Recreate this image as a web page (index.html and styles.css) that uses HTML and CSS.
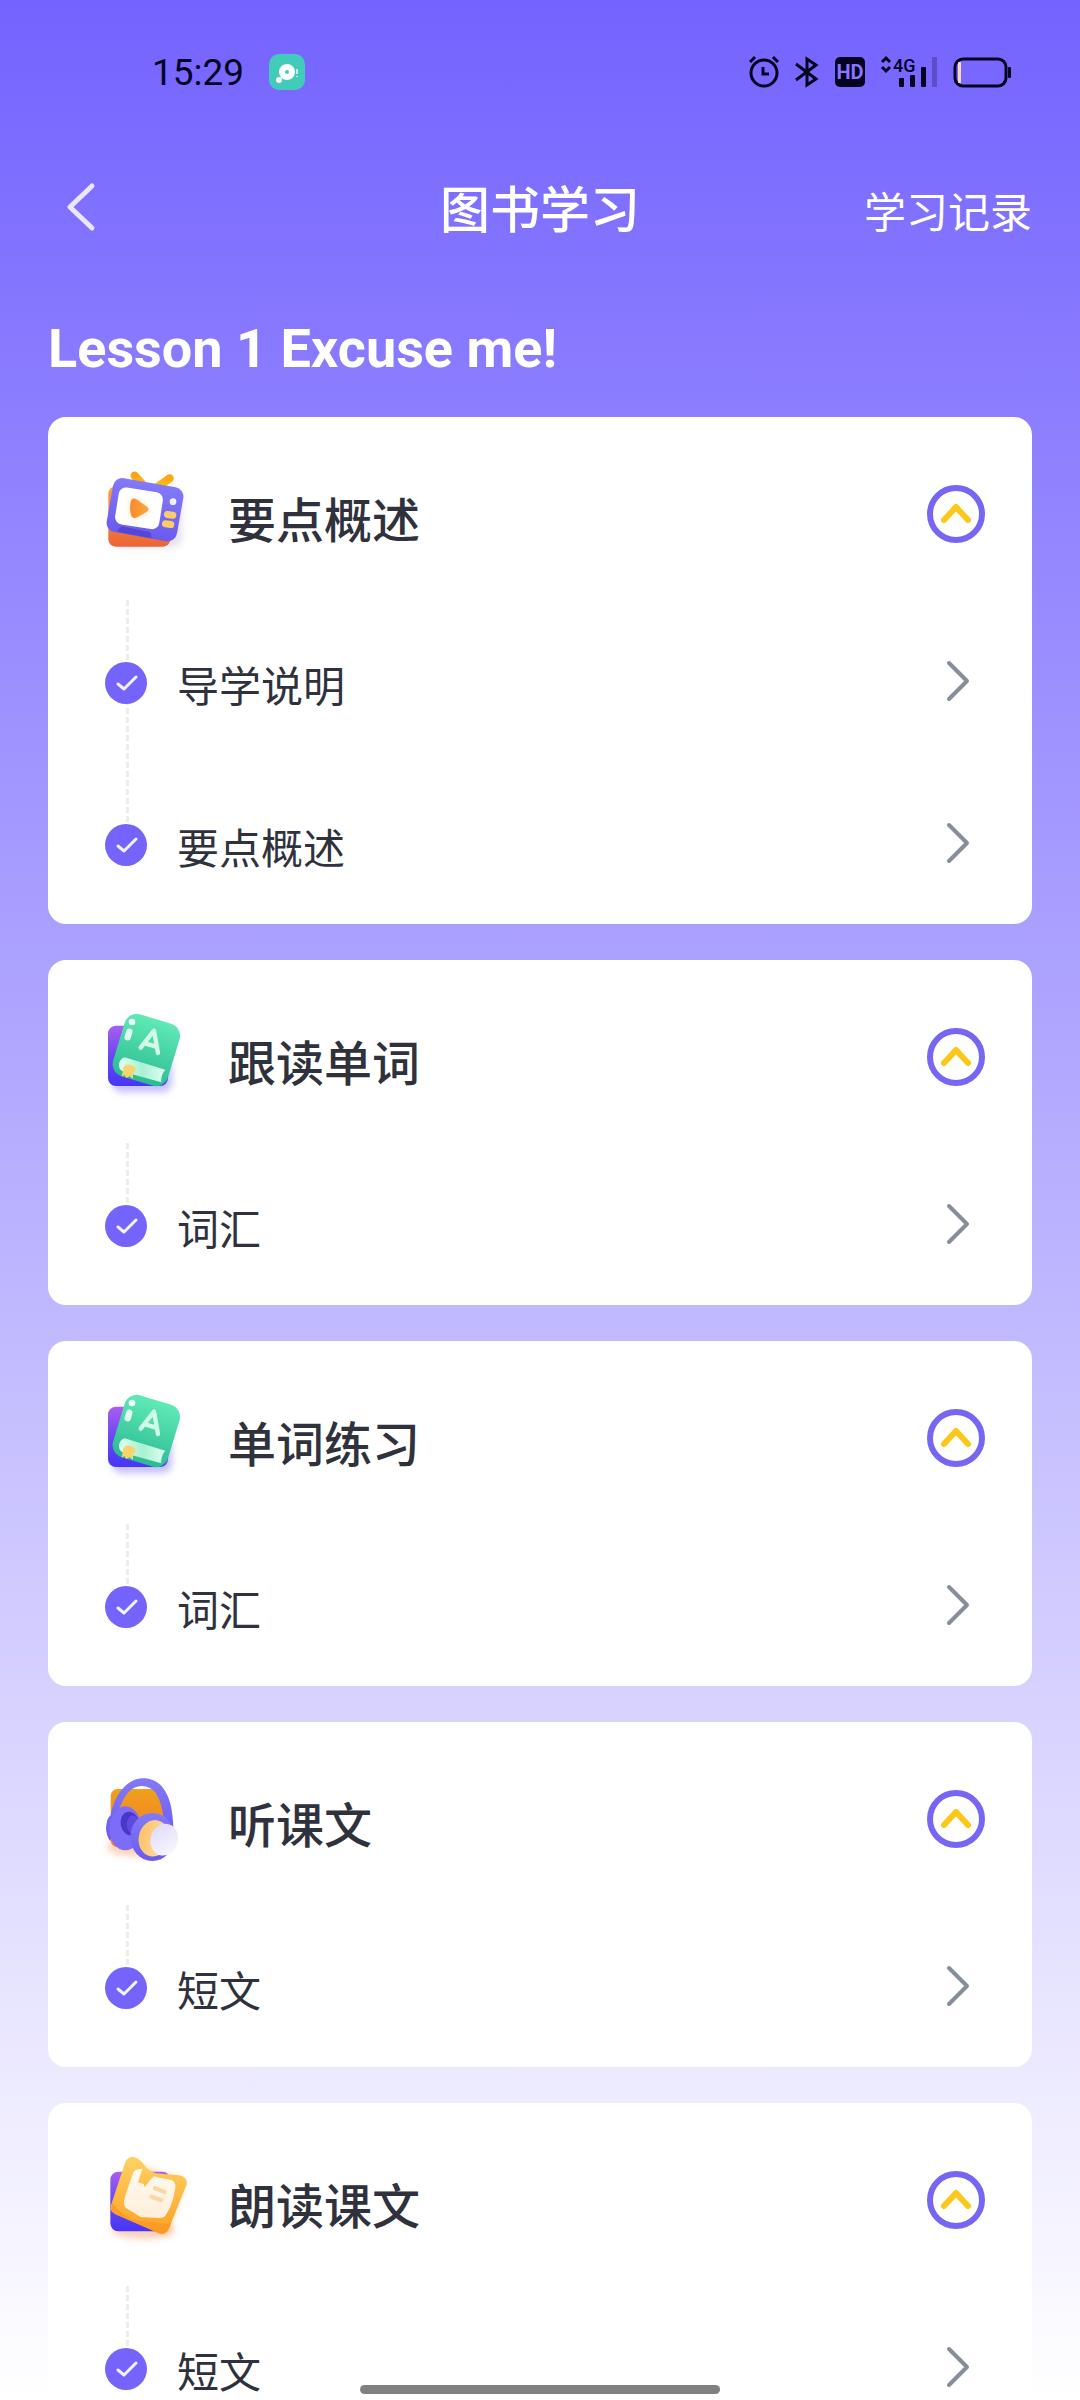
FILE: index.html
```html
<!DOCTYPE html>
<html lang="zh-CN">
<head>
    <meta charset="UTF-8">
    <meta name="viewport" content="width=device-width, initial-scale=1.0">
    <title>图书学习</title>
    <link rel="stylesheet" href="styles.css">
</head>
<body>

<!-- shared icons -->
<svg class="sprite" aria-hidden="true">
    <defs>
        <linearGradient id="orange" x1="0" y1="0" x2="0" y2="1">
            <stop offset="0" stop-color="#ffa040"/><stop offset="1" stop-color="#ea6536"/>
        </linearGradient>
        <linearGradient id="amber" x1="0" y1="0" x2="0" y2="1">
            <stop offset="0" stop-color="#efa01c"/><stop offset="1" stop-color="#f07a2c"/>
        </linearGradient>
        <linearGradient id="antenna" gradientUnits="userSpaceOnUse" x1="0" y1="40" x2="0" y2="90">
            <stop offset="0" stop-color="#ff9c1c"/><stop offset="1" stop-color="#ffc40c"/>
        </linearGradient>
        <linearGradient id="indigo" x1="0" y1="0" x2="0" y2="1">
            <stop offset="0" stop-color="#827af8"/><stop offset="1" stop-color="#6a5af0"/>
        </linearGradient>
        <linearGradient id="violet" x1="0" y1="0" x2="0" y2="1">
            <stop offset="0" stop-color="#a85ef0"/><stop offset=".5" stop-color="#6a48f0"/><stop offset="1" stop-color="#4636f6"/>
        </linearGradient>
        <linearGradient id="green" x1="0" y1="0" x2="0" y2="1">
            <stop offset="0" stop-color="#5feab6"/><stop offset="1" stop-color="#2cba92"/>
        </linearGradient>
        <linearGradient id="pages" x1="0" y1="0" x2="1" y2="0">
            <stop offset="0" stop-color="#e2fff0"/><stop offset=".5" stop-color="#a9f0d2"/><stop offset="1" stop-color="#dcfff0"/>
        </linearGradient>
        <linearGradient id="play" x1="0" y1="0" x2="1" y2="0">
            <stop offset="0" stop-color="#f98a2c"/><stop offset="1" stop-color="#f9a83c"/>
        </linearGradient>
        <linearGradient id="gold" x1="0" y1="0" x2="0" y2="1">
            <stop offset="0" stop-color="#ffd263"/><stop offset="1" stop-color="#fda125"/>
        </linearGradient>
        <linearGradient id="cream" x1="0" y1="0" x2="0" y2="1">
            <stop offset="0" stop-color="#fffaf0"/><stop offset="1" stop-color="#ffeeda"/>
        </linearGradient>
        <linearGradient id="pearl" x1="0" y1="0" x2="1" y2="1">
            <stop offset="0" stop-color="#dcd8fc"/><stop offset="1" stop-color="#fbfaff"/>
        </linearGradient>
        <linearGradient id="honey" x1="0" y1="0" x2="1" y2="0">
            <stop offset="0" stop-color="#fdc266"/><stop offset="1" stop-color="#fde0b0"/>
        </linearGradient>
        <filter id="soft" x="-50%" y="-50%" width="200%" height="200%"><feGaussianBlur stdDeviation="11"/></filter>
    </defs>

    <symbol id="icon-tv" viewBox="0 0 330 330">
        <rect x="66" y="90" width="210" height="176" rx="30" fill="#8a80c0" opacity=".22" filter="url(#soft)"/>
        <path d="M134 50l28 32M239 58l-38 27" stroke="url(#antenna)" stroke-width="25" stroke-linecap="round"/>
        <rect x="55" y="82" width="186" height="181" rx="22" fill="url(#orange)"/>
        <rect x="58" y="70" width="214" height="164" rx="28" fill="url(#indigo)" transform="rotate(10 165 152)"/>
        <path d="M82 218l6-10q4-6 12-5l76 15q8 2 8 10v10z" fill="#5546d6"/>
        <rect x="80" y="92" width="134" height="112" rx="22" fill="#fff" transform="rotate(9 147 148)"/>
        <path d="M122 126q4-12 15-8l36 26q7 7-1 15l-34 17q-12 4-15-8-4-22-1-42z" fill="#fde3c8" filter="url(#soft)"/>
        <path d="M122 128q4-13 16-8l34 24q7 7-1 14l-32 18q-12 5-16-7-5-20-1-41z" fill="url(#play)"/>
        <circle cx="249" cy="128" r="10" fill="#f3efff"/>
        <rect x="222" y="157" width="37" height="21" rx="10" fill="#fdcb68" transform="rotate(8 241 167)"/>
        <rect x="216" y="185" width="37" height="21" rx="10" fill="#fdcb68" transform="rotate(8 234 195)"/>
    </symbol>

    <symbol id="icon-book" viewBox="0 9 330 330">
        <rect x="66" y="170" width="180" height="110" rx="30" fill="#6f62f4" opacity=".4" filter="url(#soft)"/>
        <rect x="54" y="80" width="180" height="181" rx="24" fill="url(#violet)"/>
        <rect x="83" y="56" width="172" height="194" rx="38" fill="url(#green)" transform="rotate(17 169 153)"/>
        <circle cx="126" cy="69" r="10" fill="#effff8"/>
        <path d="M118 98l-5 17" stroke="#e2fff2" stroke-width="19" stroke-linecap="round"/>
        <path d="M152 146l40-51 12 67M168 134l30 9" fill="none" stroke="#d2fae9" stroke-width="13" stroke-linecap="round" stroke-linejoin="round"/>
        <path d="M104 175l122 37q-14 16-12 38L102 219q-18-8-15-25 5-17 17-19z" fill="url(#pages)"/>
        <path d="M104 200q14-8 27 2 8 8 4 17l-6 2v19l-10-8-11 5-4-9-9 5 4-19q-2-8 5-14z" fill="#f8d56c"/>
    </symbol>

    <symbol id="icon-headphones" viewBox="0 0 330 330">
        <ellipse cx="145" cy="248" rx="95" ry="28" fill="#f5884c" opacity=".4" filter="url(#soft)"/>
        <rect x="62" y="75" width="160" height="174" rx="20" fill="url(#amber)"/>
        <path d="M110 82q35-32 78-10l12 14q-22-22-55-18-20 2-35 14z" fill="#fff"/>
        <path d="M48 192q2-30 14-38C72 98 108 43 160 43c54 0 88 48 90 148l-30-34c-8-58-26-91-66-91-30 0-52 28-65 66l-28 100q-12-16-13-40z" fill="url(#indigo)"/>
        <ellipse cx="106" cy="193" rx="48" ry="66" fill="#7b6df7"/>
        <ellipse cx="120" cy="179" rx="28" ry="36" fill="#4837c8" transform="rotate(-12 120 179)"/>
        <ellipse cx="128" cy="181" rx="18" ry="27" fill="#5c4bdd"/>
        <ellipse cx="187" cy="219" rx="66" ry="72" fill="url(#indigo)"/>
        <ellipse cx="192" cy="223" rx="46" ry="55" fill="url(#honey)" transform="rotate(12 192 223)"/>
        <ellipse cx="223" cy="227" rx="41" ry="48" fill="url(#pearl)" transform="rotate(18 223 227)"/>
    </symbol>

    <symbol id="icon-read" viewBox="0 3 330 330">
        <ellipse cx="160" cy="258" rx="95" ry="26" fill="#f58a4c" opacity=".4" filter="url(#soft)"/>
        <path d="M130 60l156 50-56 160-150-70z" fill="#f5a94c" opacity=".5" filter="url(#soft)"/>
        <rect x="61" y="83" width="180" height="179" rx="24" fill="url(#violet)"/>
        <path d="M105 56q9-20 29-16 14 4 27 21 15 22 37 27l69 6q25 3 23 27l-54 134q-9 18-28 13L76 211q-20-10-13-27z" fill="url(#gold)"/>
        <path d="M67 176q28 38 64 52l98 12q10 0 16-6l-13 28q-8 10-23 7L76 211q-20-10-9-35z" fill="#fa9420" opacity=".65"/>
        <path d="M131 83q8-10 26-8l-13 40 17 5 3 10 17-23 12-10q12 4 24 6l24 4q17 4 15 24-4 30-16 60l-13 23q-5 9-22 8l-53-3-45-28q-10-10-2-32 12-40 26-76z" fill="url(#cream)"/>
        <path d="M195 133l29 11M185 158l29 11" stroke="#fdd6a6" stroke-width="13" stroke-linecap="round"/>
    </symbol>

    <symbol id="icon-check" viewBox="0 0 42 42">
        <circle cx="21" cy="21" r="21" fill="#7464fb"/>
        <path d="M13 22l6 5 12-12" fill="none" stroke="#f4f2ff" stroke-width="3" stroke-linecap="round" stroke-linejoin="round"/>
    </symbol>

    <symbol id="icon-up" viewBox="0 0 58 58">
        <circle cx="29" cy="29" r="26" fill="#fff" stroke="#7666f3" stroke-width="6"/>
        <path d="M17 35l12-13 12 13" fill="none" stroke="#fbc81a" stroke-width="6" stroke-linecap="round" stroke-linejoin="round"/>
    </symbol>

    <symbol id="icon-right" viewBox="0 0 26 44">
        <path d="M4 4l18 18L4 40" fill="none" stroke="#868e9b" stroke-width="4" stroke-linecap="round" stroke-linejoin="round"/>
    </symbol>
</svg>

<div class="app">
    <div class="status-bar">
        <span class="time">15:29</span>
        <svg class="app-icon" width="36" height="36" viewBox="0 0 36 36">
            <rect width="36" height="36" rx="10" fill="#43cbb9"/>
            <circle cx="18" cy="18" r="5" fill="none" stroke="#fff" stroke-width="6"/>
            <circle cx="10" cy="26" r="3" fill="#fff"/>
            <path d="M28 15v5M28 22v1" stroke="#b8f0e6" stroke-width="2"/>
        </svg>
        <div class="status-icons">
            <svg width="30" height="32" viewBox="0 0 30 32" fill="none" stroke="currentColor" stroke-width="3">
                <circle cx="15" cy="17" r="13"/>
                <path d="M1 6l5-5M29 6l-5-5M14 11v7h6"/>
            </svg>
            <svg width="24" height="32" viewBox="0 0 24 32" fill="none" stroke="currentColor" stroke-width="3">
                <path d="M1 8l20 15-9 6V3l9 6L1 24"/>
            </svg>
            <svg width="30" height="32" viewBox="0 0 30 32">
                <rect y="1" width="30" height="30" rx="5" fill="currentColor"/>
                <text class="hd" x="15" y="23" text-anchor="middle">HD</text>
            </svg>
            <svg width="56" height="32" viewBox="0 0 56 32" fill="currentColor">
                <path d="M1 6l4-4 4 4M1 11l4 4 4-4" fill="none" stroke="currentColor" stroke-width="3"/>
                <text class="net" x="12" y="16">4G</text>
                <rect x="18" y="22" width="5" height="9" rx="1"/>
                <rect x="29" y="19" width="5" height="12" rx="1"/>
                <rect x="40" y="11" width="5" height="20" rx="1"/>
                <rect x="51" y="1" width="5" height="30" rx="1" opacity=".25"/>
            </svg>
            <svg width="58" height="32" viewBox="0 0 58 32">
                <rect x="2" y="3" width="51" height="27" rx="8" fill="none" stroke="currentColor" stroke-width="3"/>
                <rect x="5" y="6" width="3" height="21" rx="1" fill="#fbd9b4"/>
                <rect x="55" y="11" width="3" height="11" rx="1" fill="currentColor"/>
            </svg>
        </div>
    </div>

    <header class="navbar">
        <button class="back" aria-label="返回">
            <svg width="30" height="50" viewBox="0 0 30 50">
                <path d="M26 4L4 25l22 21" fill="none" stroke="#ebe7ff" stroke-width="5" stroke-linecap="round" stroke-linejoin="round"/>
            </svg>
        </button>
        <h1>图书学习</h1>
        <a href="#" class="record">学习记录</a>
    </header>

    <main>
        <h2>Lesson 1 Excuse me!</h2>

        <section class="card">
            <div class="card-head">
                <svg class="art"><use href="#icon-tv"/></svg>
                <h3>要点概述</h3>
                <button class="toggle" aria-label="收起"><svg><use href="#icon-up"/></svg></button>
            </div>
            <a href="#" class="item">
                <span class="track"><svg><use href="#icon-check"/></svg></span>
                <span class="label">导学说明</span>
                <svg class="arrow"><use href="#icon-right"/></svg>
            </a>
            <a href="#" class="item">
                <span class="track"><svg><use href="#icon-check"/></svg></span>
                <span class="label">要点概述</span>
                <svg class="arrow"><use href="#icon-right"/></svg>
            </a>
        </section>

        <section class="card">
            <div class="card-head">
                <svg class="art"><use href="#icon-book"/></svg>
                <h3>跟读单词</h3>
                <button class="toggle" aria-label="收起"><svg><use href="#icon-up"/></svg></button>
            </div>
            <a href="#" class="item">
                <span class="track"><svg><use href="#icon-check"/></svg></span>
                <span class="label">词汇</span>
                <svg class="arrow"><use href="#icon-right"/></svg>
            </a>
        </section>

        <section class="card">
            <div class="card-head">
                <svg class="art"><use href="#icon-book"/></svg>
                <h3>单词练习</h3>
                <button class="toggle" aria-label="收起"><svg><use href="#icon-up"/></svg></button>
            </div>
            <a href="#" class="item">
                <span class="track"><svg><use href="#icon-check"/></svg></span>
                <span class="label">词汇</span>
                <svg class="arrow"><use href="#icon-right"/></svg>
            </a>
        </section>

        <section class="card">
            <div class="card-head">
                <svg class="art"><use href="#icon-headphones"/></svg>
                <h3>听课文</h3>
                <button class="toggle" aria-label="收起"><svg><use href="#icon-up"/></svg></button>
            </div>
            <a href="#" class="item">
                <span class="track"><svg><use href="#icon-check"/></svg></span>
                <span class="label">短文</span>
                <svg class="arrow"><use href="#icon-right"/></svg>
            </a>
        </section>

        <section class="card">
            <div class="card-head">
                <svg class="art"><use href="#icon-read"/></svg>
                <h3>朗读课文</h3>
                <button class="toggle" aria-label="收起"><svg><use href="#icon-up"/></svg></button>
            </div>
            <a href="#" class="item">
                <span class="track"><svg><use href="#icon-check"/></svg></span>
                <span class="label">短文</span>
                <svg class="arrow"><use href="#icon-right"/></svg>
            </a>
        </section>
    </main>
</div>

<div class="home-bar"></div>

</body>
</html>
```
FILE: styles.css
```css
* {
    box-sizing: border-box;
}
body {
    margin: 0;
    font-family: Roboto, "Noto Sans CJK SC", sans-serif;
    color: #2f323d;
}
h1, h2, h3 {
    margin: 0;
}
a {
    color: inherit;
    text-decoration: none;
}
button {
    padding: 0;
    border: none;
    background: none;
    cursor: pointer;
}
svg {
    display: block;
    flex-shrink: 0;
}
.sprite {
    position: absolute;
    width: 0;
    height: 0;
}
.app {
    display: flex;
    flex-direction: column;
    height: 100vh;
    background: linear-gradient(#7463ff, #fff);
}

/* status bar */
.status-bar {
    display: flex;
    align-items: center;
    height: 144px;
    padding: 0 69px 0 152px;
    color: #06021f;
    flex-shrink: 0;
}
.time {
    font-size: 37px;
}
.app-icon {
    margin-left: 25px;
}
.status-icons {
    display: flex;
    gap: 16px;
    margin-left: auto;
}
.status-icons svg {
    overflow: visible;
}
.hd {
    font-size: 20px;
    font-weight: 700;
    fill: #8577ff;
}
.net {
    font-size: 18px;
    font-weight: 500;
}

/* navbar */
.navbar {
    display: grid;
    grid-template-columns: 1fr auto 1fr;
    align-items: center;
    height: 126px;
    padding: 0 48px;
    color: #fff;
    flex-shrink: 0;
}
.navbar h1 {
    padding-bottom: 2px;
    font-size: 50px;
    font-weight: 500;
}
.back {
    justify-self: start;
    margin-left: 18px;
}
.record {
    justify-self: end;
    padding-top: 4px;
    font-size: 42px;
}

/* lesson list */
main {
    flex: 1;
    min-height: 0;
    padding: 0 48px;
    overflow-y: auto;
    scrollbar-width: none;
}
main h2 {
    padding: 47px 0 36px;
    font-size: 54px;
    line-height: 64px;
    color: #fff;
}
.card {
    margin-bottom: 36px;
    border-radius: 18px;
    background: #fff;
}
.card-head {
    display: flex;
    align-items: center;
    height: 183px;
    padding: 10px 47px 0 42px;
}
.art {
    width: 110px;
    height: 110px;
}
.card-head h3 {
    flex: 1;
    padding: 6px 0 0 28px;
    font-size: 48px;
    font-weight: 500;
}
.toggle svg {
    width: 58px;
    height: 58px;
}
.item {
    display: flex;
    align-items: center;
    height: 162px;
    padding: 0 61px 0 57px;
}
.track {
    align-self: stretch;
    width: 42px;
    padding-top: 62px;
    background: repeating-linear-gradient(#ededed 0 6px, #fff 6px 9px) 21px 0 / 3px 100% no-repeat;
}
.item:last-child .track {
    background-size: 3px 62px;
}
.track svg {
    width: 42px;
    height: 42px;
}
.label {
    flex: 1;
    padding: 5px 0 0 30px;
    font-size: 42px;
}
.arrow {
    width: 26px;
    height: 44px;
}

/* gesture bar */
.home-bar {
    position: fixed;
    left: 50%;
    bottom: 6px;
    width: 33.33%;
    height: 9px;
    border-radius: 5px;
    background: #808080;
    transform: translateX(-50%);
}
```
